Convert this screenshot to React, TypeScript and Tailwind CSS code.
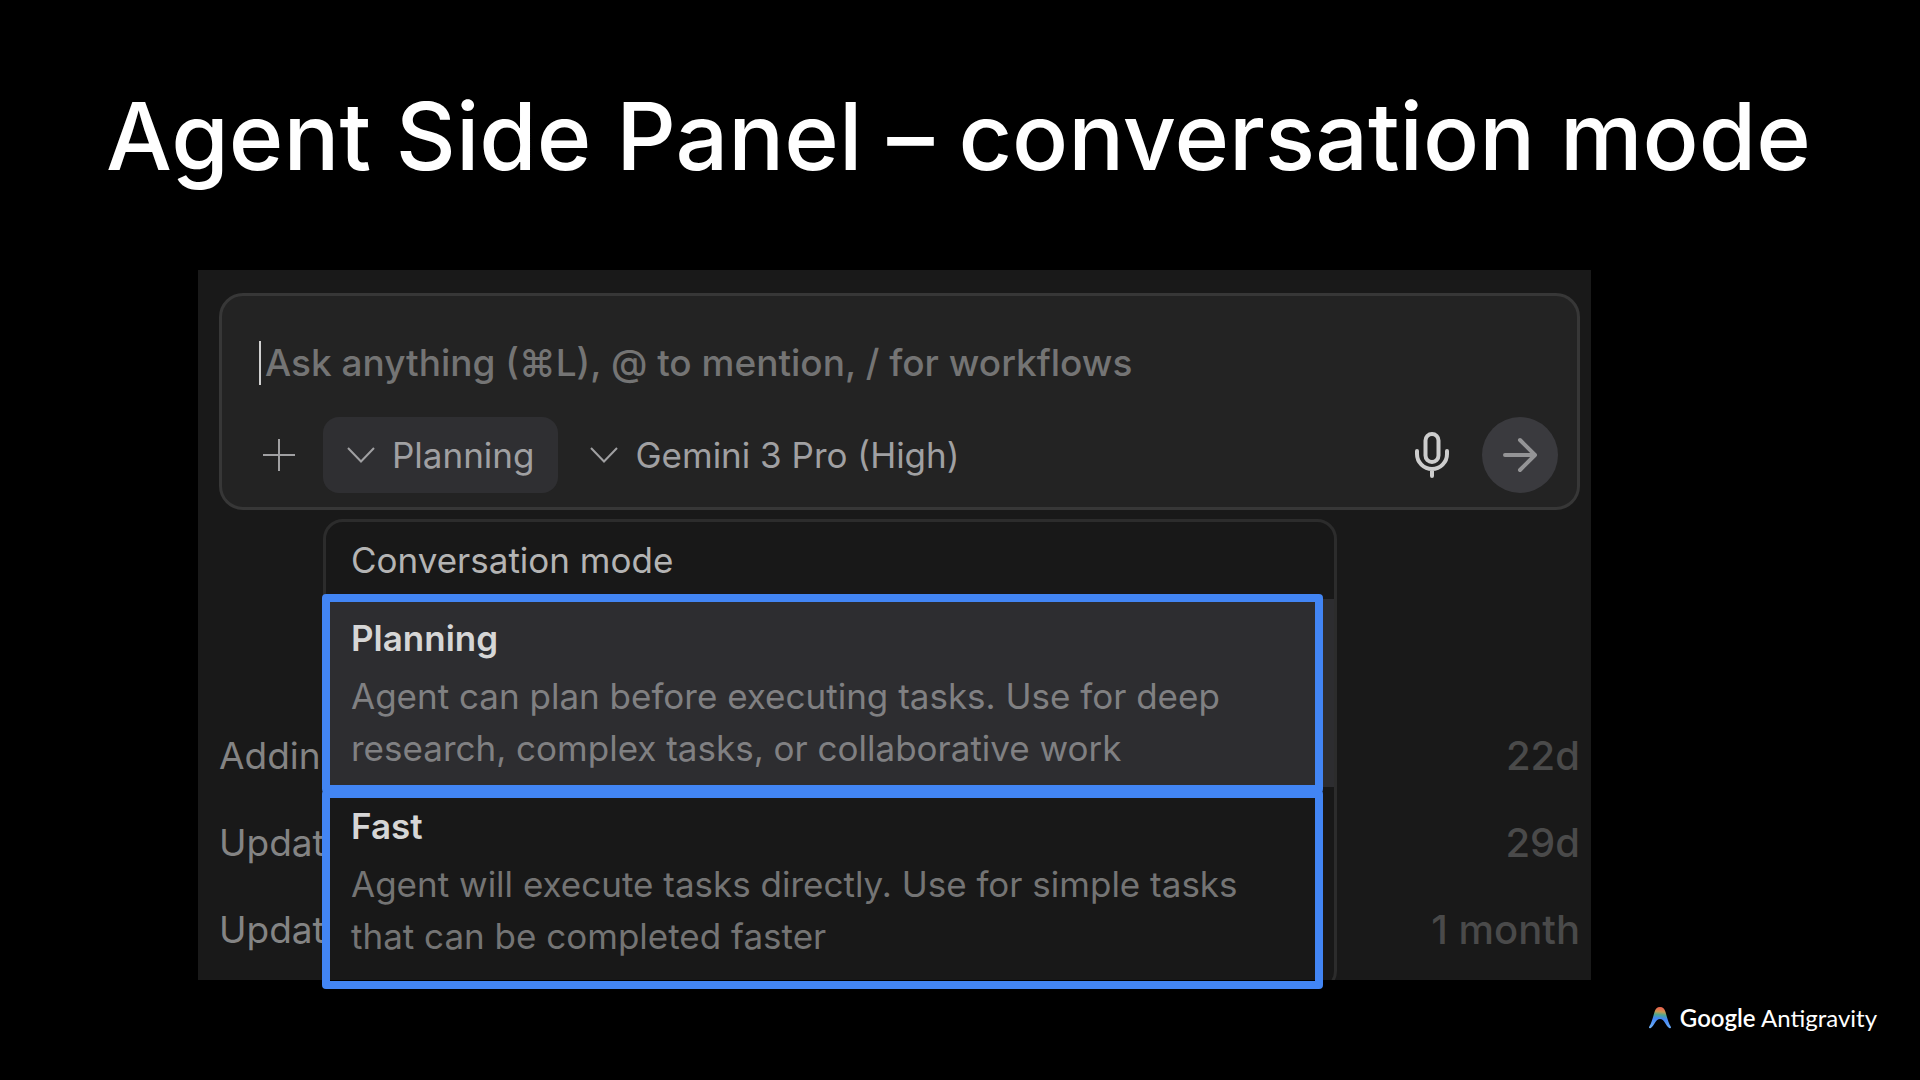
import React from "react";

const modes = [
    {
        name: "Planning",
        description: "Agent can plan before executing tasks. Use for deep research, complex tasks, or collaborative work",
        active: true,
    },
    {
        name: "Fast",
        description: "Agent will execute tasks directly. Use for simple tasks that can be completed faster",
        active: false,
    },
];

const history = [
    { title: "Addin", age: "22d" },
    { title: "Updat", age: "29d" },
    { title: "Updat", age: "1 month" },
];

const Chevron: React.FC = () => (
    <svg className="h-4 w-7" viewBox="0 0 28 16" fill="none" stroke="currentColor" strokeWidth="2">
        <path d="M1 1l13 13.5L27 1" />
    </svg>
);

const PromptBox: React.FC = () => (
    <div className="rounded-3xl border-3 border-[#373737] bg-[#232323] pt-[45px] pr-[19px] pb-[14px] pl-[41px]">
        <div className="relative">
            <span className="absolute top-0 -left-1 h-11 w-0.5 bg-[#d0d0d0]" />
            <input
                type="text"
                aria-label="Message"
                placeholder="Ask anything (⌘L), @ to mention, / for workflows"
                className="block h-11 w-full bg-transparent pl-[2px] text-[37px] leading-11 font-medium outline-none placeholder:text-[#747474]"
            />
        </div>
        <div className="mt-8 flex items-center text-[35px] text-[#a0a0a2]">
            <button aria-label="Add context" className="mr-7">
                <svg className="size-8" viewBox="0 0 32 32" fill="none" stroke="currentColor" strokeWidth="2">
                    <path d="M16 0v32M0 16h32" />
                </svg>
            </button>
            <button className="flex h-19 items-center gap-[17px] rounded-2xl bg-[#2f2f32] px-6">
                <Chevron />
                Planning
            </button>
            <button className="ml-2 flex h-19 items-center gap-[17px] px-6">
                <Chevron />
                Gemini 3 Pro (High)
            </button>
            <button aria-label="Voice input" className="mr-8 ml-auto text-[#cdcdcd]">
                <svg className="h-12 w-9" viewBox="0 0 36 48" fill="none" stroke="currentColor" strokeWidth="4" strokeLinecap="round">
                    <rect x="11.5" y="3" width="13" height="28" rx="6.5" />
                    <path d="M3 20v3a15 15 0 0 0 30 0v-3M18 38v7" />
                </svg>
            </button>
            <button aria-label="Send" className="flex size-19 items-center justify-center rounded-full bg-[#3a3a3e] text-[#949496]">
                <svg className="size-9" viewBox="0 0 36 36" fill="none" stroke="currentColor" strokeWidth="4" strokeLinecap="round" strokeLinejoin="round">
                    <path d="M3 18h30M18 3l15 15-15 15" />
                </svg>
            </button>
        </div>
    </div>
);

const ModeMenu: React.FC = () => (
    <div className="absolute top-[249px] right-[254px] left-[125px] h-[472px] overflow-hidden rounded-[20px] border-3 border-[#2c2c2c] bg-[#181818] text-[35px]">
        <div className="flex h-[77px] items-center px-[25px] text-[#b4b4b4]">Conversation mode</div>
        {modes.map((mode) => (
            <button
                key={mode.name}
                className={`flex h-[188px] w-full flex-col items-start pt-[17px] pr-16 pl-[25px] text-left ${mode.active ? "bg-[#2d2d30]" : ""}`}
            >
                <span className="leading-11 font-semibold text-[#d6d6d6]">{mode.name}</span>
                <span className={`mt-[10px] leading-[52px] ${mode.active ? "text-[#808082]" : "text-[#747474]"}`}>
                    {mode.description}
                </span>
            </button>
        ))}
    </div>
);

const Logo: React.FC = () => (
    <div className="flex items-center gap-2 text-[24px] leading-8 text-white">
        <svg className="h-[22px] w-6" viewBox="0 0 24 22">
            <defs>
                <linearGradient id="arc" x1="0.3" y1="0" x2="0.2" y2="1">
                    <stop offset="0.05" stopColor="#e8694f" />
                    <stop offset="0.2" stopColor="#c79a52" />
                    <stop offset="0.34" stopColor="#4fa88c" />
                    <stop offset="0.52" stopColor="#4285f4" />
                    <stop offset="1" stopColor="#6fb0f5" />
                </linearGradient>
            </defs>
            <path
                fill="url(#arc)"
                d="M12 0C9 0 7.600 1.800 6.500 5 5 10 3.800 15.500 1.300 19.600c-.9 1.500.3 2.200 1.500 1.500C6.300 18.800 7.500 12 12 12s5.700 6.800 9.200 9.100c1.200.7 2.400 0 1.500-1.500C20.200 15.500 19 10 17.500 5 16.400 1.800 15 0 12 0z"
            />
        </svg>
        <span className="font-['Lato',sans-serif]">
            <span className="font-semibold">Google</span> <span className="font-normal">Antigravity</span>
        </span>
    </div>
);

export default function App() {
    return (
        <main className="min-h-screen overflow-hidden bg-black pt-[76px] font-['Inter',sans-serif]">
            <h1 className="px-[106px] text-[93px] leading-[120px] font-medium whitespace-nowrap text-white">
                Agent Side Panel – conversation mode
            </h1>

            <section className="relative mt-[74px] mr-[329px] ml-[198px]">
                <div className="relative overflow-hidden bg-[#191919] pt-[23px] pr-[11px] pb-[7px] pl-[21px]">
                    <PromptBox />
                    <ul className="mt-[202px] text-[37px] leading-[87px]">
                        {history.map((item, i) => (
                            <li key={i} className="flex justify-between">
                                <span className="text-[#848484]">{item.title}</span>
                                <span className="text-[40px] font-medium text-[#4a4a4a]">{item.age}</span>
                            </li>
                        ))}
                    </ul>
                    <ModeMenu />
                </div>

                {/* highlight frames around the two modes */}
                <div className="pointer-events-none absolute top-[324px] right-[268px] left-[124px]">
                    <div className="h-[199px] rounded-sm border-8 border-[#4285f4]" />
                    <div className="-mt-[3px] h-[199px] rounded-sm border-8 border-[#4285f4]" />
                </div>
            </section>

            <footer className="mt-[22px] flex justify-end pr-[43px]">
                <Logo />
            </footer>
        </main>
    );
}
